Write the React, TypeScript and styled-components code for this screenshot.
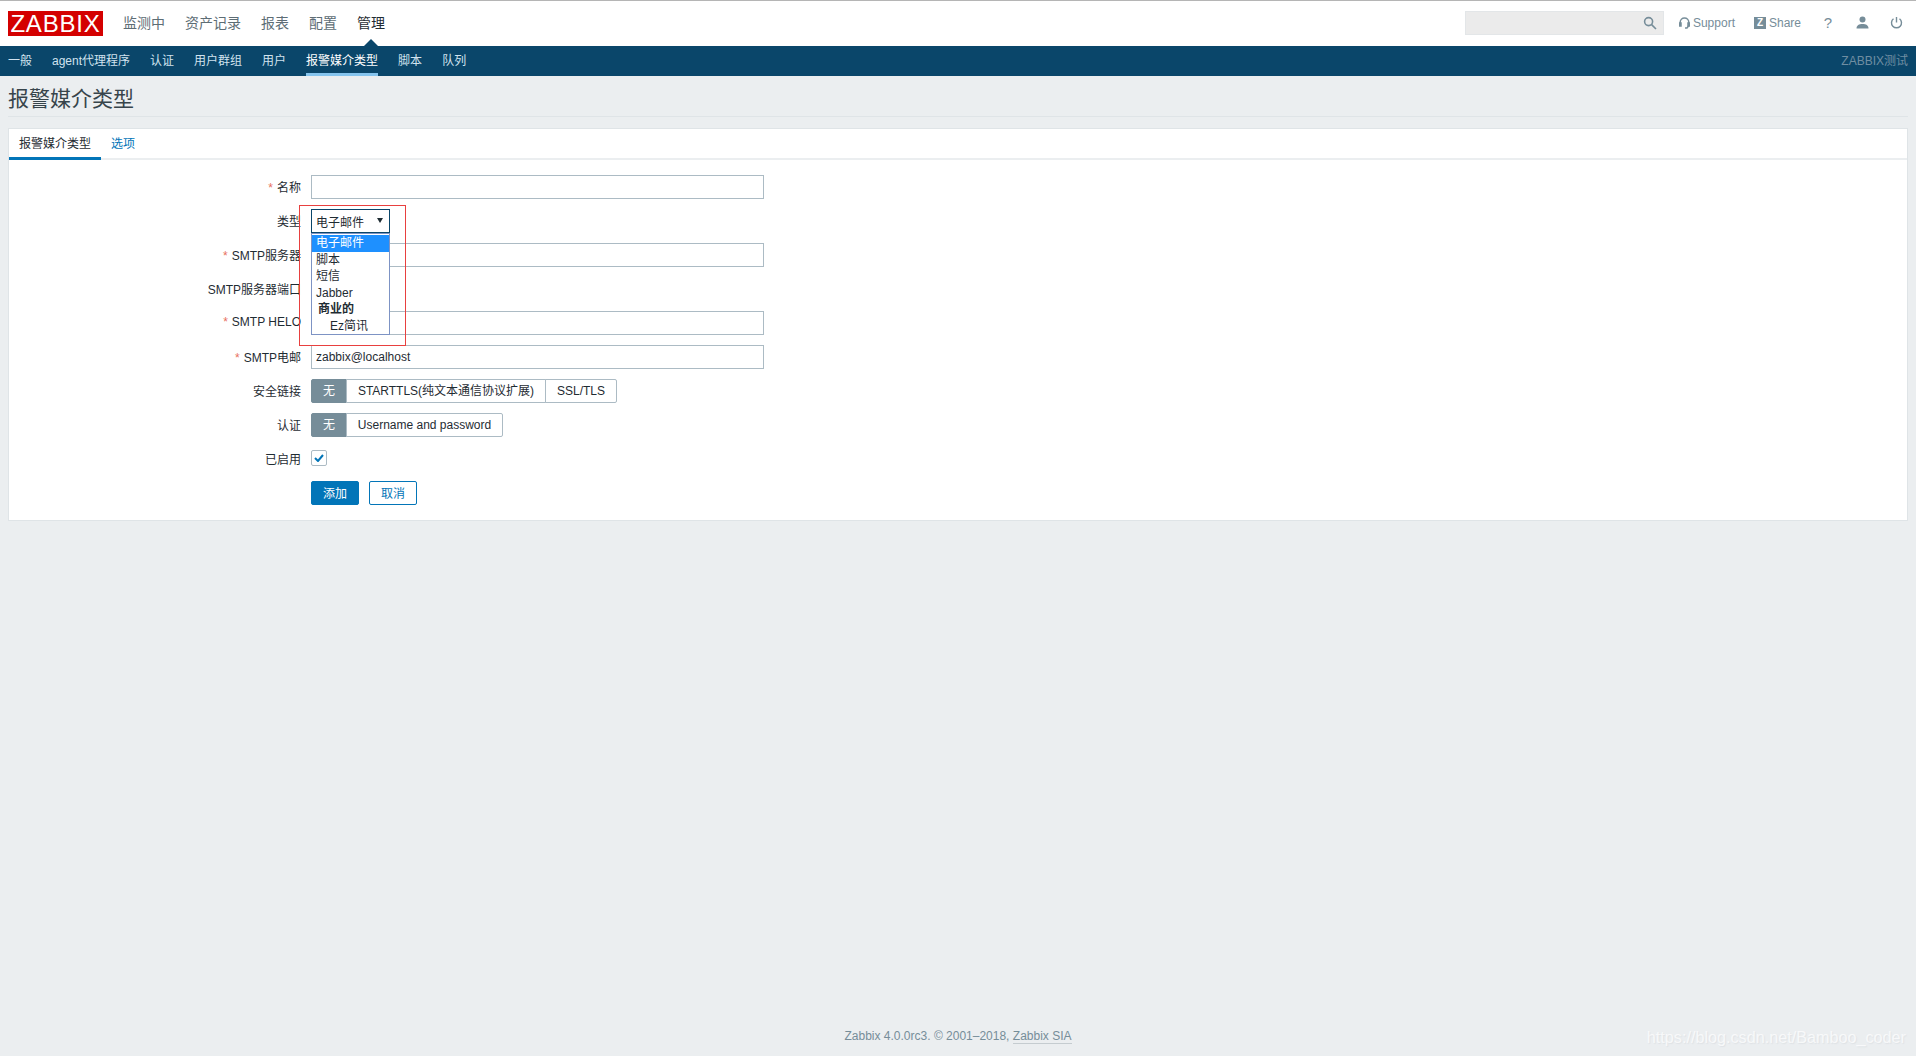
import React from "react";
import styled, { createGlobalStyle } from "styled-components";

const Global = createGlobalStyle`
  html, body { margin: 0; padding: 0; height: 100%; background: #ebeef0; }
  body { font-family: "Liberation Sans", "Noto Sans CJK SC", Arial, sans-serif; font-size: 12px; color: #1f2c33; overflow: hidden; }
  * { box-sizing: border-box; }
`;

const Page = styled.div`
  position: relative; width: 1916px; height: 1056px; display: flex; flex-direction: column; background: #ebeef0;
`;
const TopBar = styled.header`
  height: 46px; background: #fff; border-top: 1px solid #b5b5b5; display: flex; align-items: center; padding: 0 8px;
`;
const Logo = styled.div`
  width: 95px; height: 25px; margin-top: -1px; background: #d40000; color: #fff; font-size: 24px; line-height: 25px;
  text-align: center; letter-spacing: 0.8px; font-family: "Liberation Sans", sans-serif;
`;
const MainNav = styled.nav`display: flex; gap: 20px; margin-left: 20px; margin-top: -2px;`;
const MainItem = styled.span<{ $active?: boolean }>`
  position: relative; font-size: 14px; line-height: 20px; color: ${p => (p.$active ? "#1f2c33" : "#5d6d75")};
  ${p => p.$active && `&::after { content: ""; position: absolute; left: 50%; margin-left: -8px; top: 26px; border: 8px solid transparent; border-top: 0; border-bottom-color: #0a466a; }`}
`;
const Right = styled.div`margin-left: auto; display: flex; align-items: center; color: #768d99; margin-top: -2px; padding-right: 2px;`;
const Search = styled.div`
  width: 199px; height: 24px; background: #ebebeb; border: 1px solid #e3e6e8; display: flex; align-items: center; justify-content: flex-end; padding-right: 6px; margin-right: 15px;
`;
const TopLink = styled.span<{ $w?: number; $ml?: number; $fs?: number }>`
  display: flex; align-items: center; gap: 3px; font-size: ${p => p.$fs ?? 12}px; color: #768d99;
  margin-left: ${p => p.$ml ?? 0}px;
  ${p => p.$w ? `width: ${p.$w}px; justify-content: center;` : ""}
`;
const ZIcon = styled.span`
  width: 12px; height: 12px; background: #768d99; color: #fff; font-weight: bold; font-size: 10px; line-height: 12px; text-align: center;
`;
const SubBar = styled.nav`
  height: 30px; background: #0a466a; display: flex; align-items: stretch; padding: 0 8px; gap: 20px;
`;
const SubItem = styled.span<{ $active?: boolean }>`
  font-size: 12px; line-height: 30px; color: ${p => (p.$active ? "#fff" : "#d1e3ef")};
  border-bottom: 3px solid ${p => (p.$active ? "#85c4ee" : "transparent")};
  height: 30px;
`;
const Host = styled.span`margin-left: auto; font-size: 12px; line-height: 31px; color: #6f8ea2;`;
const Content = styled.main`padding: 0 8px; flex: 1;`;
const TitleRow = styled.div`height: 41px; border-bottom: 1px solid #dfe4e7; margin-bottom: 11px; padding-top: 11px;`;
const Title = styled.h1`margin: 0; font-size: 21px; line-height: 24px; font-weight: normal; color: #37444b;`;
const Card = styled.section`
  background: #fff; border: 1px solid #dfe4e7; height: 393px;
`;
const Tabs = styled.div`display: flex; height: 31px; border-bottom: 2px solid #ebeef0;`;
const Tab = styled.span<{ $active?: boolean }>`
  height: 31px; padding: 0 10px; font-size: 12px; line-height: 31px; color: ${p => (p.$active ? "#1f2c33" : "#0275b8")};
  border-bottom: 3px solid ${p => (p.$active ? "#0275b8" : "transparent")};
`;
const Form = styled.div`padding-top: 15px; display: flex; flex-direction: column; gap: 10px;`;
const Row = styled.div`display: flex; align-items: center; height: 24px; gap: 10px;`;
const Label = styled.label`width: 292px; text-align: right; font-size: 12px; color: #1f2c33; white-space: nowrap; padding-bottom: 2px;`;
const Star = styled.span`color: #e8705e; margin-right: 4px;`;
const Input = styled.div<{ $w?: number }>`
  width: ${p => p.$w ?? 453}px; height: 24px; border: 1px solid #acbbc4; background: #fff; padding: 0 4px; line-height: 23px; font-size: 12px; color: #1f2c33;
`;
const Field = styled.div`position: relative; width: 453px; height: 24px;`;
const SelectBox = styled.div`
  width: 79px; height: 24px; border: 1px solid #0a466a; background: #fff; padding-left: 4px; line-height: 26px; font-size: 12px; position: relative;
`;
const Caret = styled.span`
  position: absolute; right: 6px; top: 8px; border: 3px solid transparent; border-top: 5px solid #1f2c33; border-bottom: 0;
`;
const Menu = styled.div`
  position: absolute; left: 0; top: 24px; width: 79px; height: 102px; background: #fff; border: 1px solid #7d93c4; padding-top: 1px; font-size: 12px; z-index: 2;
`;
const Opt = styled.div<{ $sel?: boolean; $bold?: boolean; $indent?: number }>`
  height: 16.6px; line-height: 16.6px; padding-left: ${p => p.$indent ?? 4}px;
  background: ${p => (p.$sel ? "#1e90ff" : "transparent")}; color: ${p => (p.$sel ? "#fff" : "#1f2c33")};
  font-weight: ${p => (p.$bold ? "bold" : "normal")};
`;
const Annotation = styled.div`
  position: absolute; left: -12px; top: -4px; width: 107px; height: 141px; border: 1px solid #e8403f; z-index: 3; pointer-events: none;
`;
const Seg = styled.div`display: flex; height: 24px;`;
const SegItem = styled.span<{ $on?: boolean; $w: number }>`
  width: ${p => p.$w}px; text-align: center; line-height: 22px; font-size: 12px; border: 1px solid ${p => (p.$on ? "#768d99" : "#acbbc4")};
  margin-left: -1px; background: ${p => (p.$on ? "#768d99" : "#fff")}; color: ${p => (p.$on ? "#fff" : "#1f2c33")};
  &:first-child { margin-left: 0; border-radius: 2px 0 0 2px; }
  &:last-child { border-radius: 0 2px 2px 0; }
`;
const Check = styled.span`
  width: 16px; height: 16px; margin-top: -2px; border: 1px solid #acbbc4; border-radius: 2px; display: flex; align-items: center; justify-content: center; background: #fff;
`;
const Buttons = styled.div`display: flex; gap: 10px; margin-left: 302px;`;
const Button = styled.span<{ $primary?: boolean }>`
  width: 48px; height: 24px; border: 1px solid #0275b8; border-radius: 2px; text-align: center; line-height: 24px; font-size: 12px;
  background: ${p => (p.$primary ? "#0275b8" : "#fff")}; color: ${p => (p.$primary ? "#fff" : "#0275b8")};
`;
const Footer = styled.footer`
  position: absolute; left: 0; right: 0; top: 1029px; text-align: center; font-size: 12px; line-height: 14px; color: #768d99;
`;
const FooterLink = styled.span`border-bottom: 1px solid #c5ccd0;`;
const Watermark = styled.div`
  position: absolute; right: 10px; top: 1027px; font-size: 16.2px; line-height: 20px; color: rgba(255,255,255,.72); text-shadow: 1px 1px 1px rgba(205,211,215,.4);
`;

export default function App() {
  return (
    <Page>
      <Global />
      <TopBar>
        <Logo>ZABBIX</Logo>
        <MainNav>
          <MainItem>监测中</MainItem>
          <MainItem>资产记录</MainItem>
          <MainItem>报表</MainItem>
          <MainItem>配置</MainItem>
          <MainItem $active>管理</MainItem>
        </MainNav>
        <Right>
          <Search>
            <svg width="14" height="14" viewBox="0 0 14 14" fill="none" stroke="#768d99" strokeWidth="1.6"><circle cx="5.6" cy="5.6" r="4" /><path d="M8.6 8.6 13 13" /></svg>
          </Search>
          <TopLink>
            <svg width="11" height="12" viewBox="0 0 11 12" fill="none" stroke="#768d99" strokeWidth="1.5"><path d="M1.2 8V5.2a4.3 4.3 0 0 1 8.6 0V8" /><rect x="0.5" y="6" width="1.5" height="3" fill="#768d99" /><rect x="9" y="6" width="1.5" height="3" fill="#768d99" /><path d="M9.5 9 8 11H6" /></svg>
            Support
          </TopLink>
          <TopLink $ml={19}>
            <ZIcon>Z</ZIcon>Share
          </TopLink>
          <TopLink $w={28} $ml={13} $fs={15}>?</TopLink>
          <TopLink $w={20} $ml={10}>
            <svg width="13" height="13" viewBox="0 0 13 13" fill="#768d99"><circle cx="6.5" cy="3.6" r="3" /><path d="M0.5 12.5c0-3 2.5-4.4 6-4.4s6 1.4 6 4.4z" /></svg>
          </TopLink>
          <TopLink $w={20} $ml={14}>
            <svg width="13" height="13" viewBox="0 0 13 13" fill="none" stroke="#768d99" strokeWidth="1.4"><path d="M6.5 1v5.5" /><path d="M3.5 2.8a5 5 0 1 0 6 0" /></svg>
          </TopLink>
        </Right>
      </TopBar>
      <SubBar>
        <SubItem>一般</SubItem>
        <SubItem>agent代理程序</SubItem>
        <SubItem>认证</SubItem>
        <SubItem>用户群组</SubItem>
        <SubItem>用户</SubItem>
        <SubItem $active>报警媒介类型</SubItem>
        <SubItem>脚本</SubItem>
        <SubItem>队列</SubItem>
        <Host>ZABBIX测试</Host>
      </SubBar>
      <Content>
        <TitleRow><Title>报警媒介类型</Title></TitleRow>
        <Card>
          <Tabs>
            <Tab $active>报警媒介类型</Tab>
            <Tab>选项</Tab>
          </Tabs>
          <Form>
            <Row><Label><Star>*</Star>名称</Label><Input /></Row>
            <Row>
              <Label>类型</Label>
              <Field>
                <SelectBox>电子邮件<Caret /></SelectBox>
                <Menu>
                  <Opt $sel>电子邮件</Opt>
                  <Opt>脚本</Opt>
                  <Opt>短信</Opt>
                  <Opt>Jabber</Opt>
                  <Opt $bold $indent={6}>商业的</Opt>
                  <Opt $indent={18}>Ez简讯</Opt>
                </Menu>
                <Annotation />
              </Field>
            </Row>
            <Row><Label><Star>*</Star>SMTP服务器</Label><Input /></Row>
            <Row><Label>SMTP服务器端口</Label><Input $w={75} /></Row>
            <Row><Label><Star>*</Star>SMTP HELO</Label><Input /></Row>
            <Row><Label><Star>*</Star>SMTP电邮</Label><Input>zabbix@localhost</Input></Row>
            <Row>
              <Label>安全链接</Label>
              <Seg>
                <SegItem $on $w={36}>无</SegItem>
                <SegItem $w={200}>STARTTLS(纯文本通信协议扩展)</SegItem>
                <SegItem $w={72}>SSL/TLS</SegItem>
              </Seg>
            </Row>
            <Row>
              <Label>认证</Label>
              <Seg>
                <SegItem $on $w={36}>无</SegItem>
                <SegItem $w={157}>Username and password</SegItem>
              </Seg>
            </Row>
            <Row>
              <Label>已启用</Label>
              <Check>
                <svg width="10" height="8" viewBox="0 0 10 8" fill="none" stroke="#0275b8" strokeWidth="2"><path d="M1 4l3 3 5-6" /></svg>
              </Check>
            </Row>
            <Buttons>
              <Button $primary>添加</Button>
              <Button>取消</Button>
            </Buttons>
          </Form>
        </Card>
      </Content>
      <Footer>Zabbix 4.0.0rc3. © 2001–2018, <FooterLink>Zabbix SIA</FooterLink></Footer>
      <Watermark>https://blog.csdn.net/Bamboo_coder</Watermark>
    </Page>
  );
}
